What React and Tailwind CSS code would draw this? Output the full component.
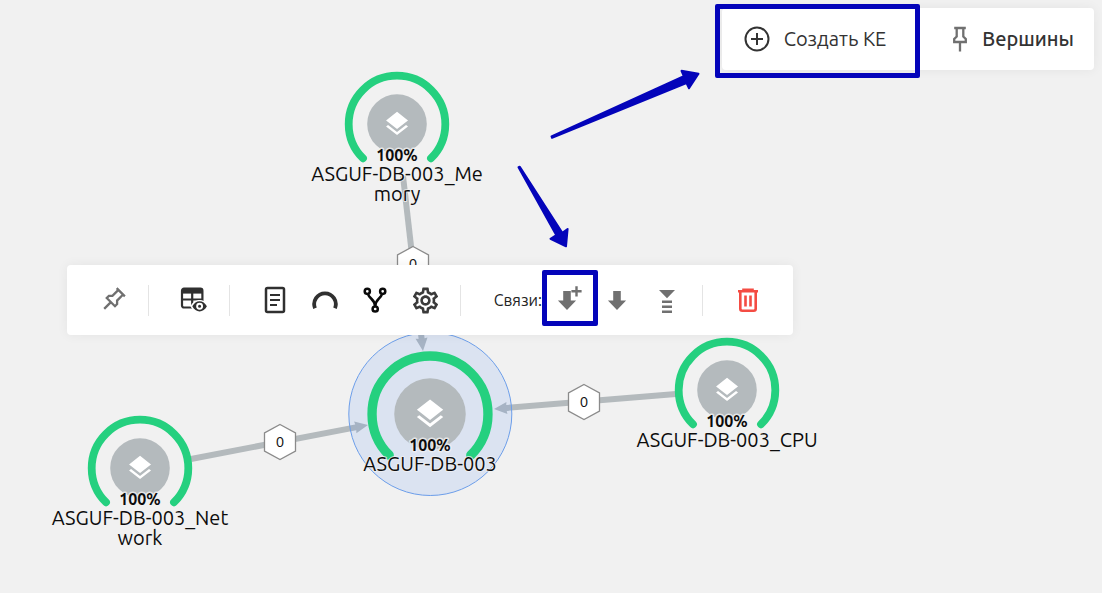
import { useState } from 'react'
import { MdOutlineSettings } from 'react-icons/md'

const nodes = [
  { id: 'memory', x: 397, y: 124, scale: 1, label: ['ASGUF-DB-003_Me', 'mory'] },
  { id: 'db', x: 430, y: 414, scale: 1.2, label: ['ASGUF-DB-003'] },
  { id: 'cpu', x: 727, y: 390, scale: 1, label: ['ASGUF-DB-003_CPU'] },
  { id: 'network', x: 140, y: 468, scale: 1, label: ['ASGUF-DB-003_Net', 'work'] }
]

const edges = [
  { id: 'memory-db', from: [403, 176], to: [423, 351], badge: [413, 264], count: 0 },
  { id: 'cpu-db', from: [676, 394], to: [494, 409], badge: [584, 402], count: 0 },
  { id: 'network-db', from: [191, 459], to: [368, 425], badge: [280, 442], count: 0 }
]

function Edge({ from, to }) {
  const length = Math.hypot(to[0] - from[0], to[1] - from[1])
  const angle = (Math.atan2(to[1] - from[1], to[0] - from[0]) * 180) / Math.PI
  return (
    <g transform={`translate(${from[0]} ${from[1]}) rotate(${angle})`} fill="#b4babd">
      <rect x="0" y="-3" width={length - 10} height="6" />
      <polygon points={`${length},0 ${length - 13},-6 ${length - 12},0 ${length - 13},6`} />
    </g>
  )
}

function EdgeBadge({ at, count }) {
  return (
    <g transform={`translate(${at[0]} ${at[1]})`}>
      <polygon points="0,-17.5 15.5,-9 15.5,9 0,17.5 -15.5,9 -15.5,-9" fill="#fff" stroke="#8b8b8b" strokeWidth="1.3" />
      <text y="5" textAnchor="middle" fontSize="15" fill="#111">{count}</text>
    </g>
  )
}

function Node({ x, y, scale, label }) {
  return (
    <g transform={`translate(${x} ${y})`}>
      <g transform={`scale(${scale})`}>
        <path d="M-34 34.3A48.3 48.3 0 1 1 34 34.3" fill="none" stroke="#25d07f" strokeWidth="7.8" strokeLinecap="round" />
        <circle r="29.8" fill="#b4babd" />
        <g transform="translate(-14.6 -14.6) scale(1.22)" fill="#fff">
          <path d="M11.99 18.54l-7.37-5.73L3 14.07l9 7 9-7-1.63-1.27-7.38 5.74zM12 16l7.36-5.73L21 9l-9-7-9 7 1.63 1.27L12 16z" />
        </g>
      </g>
      <g textAnchor="middle" fill="#0c0c0c" stroke="#f1f1f1" strokeOpacity="0.8" strokeWidth="3" strokeLinejoin="round" paintOrder="stroke">
        <text y="37" fontSize="16" fontWeight="700">100%</text>
        <text y="57" fontSize="20" strokeWidth="2">
          {label.map((line, i) => (
            <tspan key={line} x="0" dy={i === 0 ? 0 : 20}>{line}</tspan>
          ))}
        </text>
      </g>
    </g>
  )
}

function Graph() {
  return (
    <svg className="absolute left-0 top-0 overflow-visible" width="1102" height="593" role="img" aria-label="ASGUF-DB-003">
      {edges.map(edge => <Edge key={edge.id} from={edge.from} to={edge.to} />)}
      {edges.map(edge => <EdgeBadge key={edge.id} at={edge.badge} count={edge.count} />)}
      <circle cx="430.3" cy="414" r="81.5" fill="#4285f4" fillOpacity="0.12" stroke="#6c9eea" strokeWidth="1" />
      {nodes.map(node => <Node key={node.id} {...node} />)}
    </svg>
  )
}

// Tapered pointers towards the two ways of creating an item
function Pointers() {
  return (
    <svg className="pointer-events-none absolute left-0 top-0 z-20" width="1102" height="260" aria-hidden="true">
      <g fill="#0404ba" stroke="#0404ba" strokeWidth="2" strokeLinejoin="round">
        <path d="M551.5 136.3L683.8 76.2L681.5 70.8L698.5 73.8L689 88.3L686.5 83L552 137.8Z" />
        <path d="M518.5 167.2L556.3 235.2L550.5 238.8L566 246.3L567.6 229L562.3 232.8L519.8 166.8Z" />
      </g>
    </svg>
  )
}

function PlusCircleIcon() {
  return (
    <svg width="26" height="26" viewBox="0 0 26 26" fill="none" stroke="#333" strokeWidth="2">
      <circle cx="13" cy="13" r="11.5" />
      <path d="M13 7v12M7 13h12" />
    </svg>
  )
}

function PinIcon({ className }) {
  return (
    <svg className={className} width="16" height="26" viewBox="0 0 16 26" fill="none" stroke="#707070" strokeWidth="2.3">
      <path d="M2.2 2h11.6M4.7 2v8.5L2.2 13v3h11.6v-3l-2.5-2.5V2M8 16v9.5" />
    </svg>
  )
}

function TableEyeIcon() {
  return (
    <svg width="28" height="28" viewBox="0 0 28 28">
      <rect x="2" y="2.7" width="20.4" height="18.8" rx="2" fill="none" stroke="#303030" strokeWidth="2.2" />
      <path d="M2 3h20.4v4.6H2z" fill="#303030" />
      <path d="M12.2 7v15M2 13.5h20.4" stroke="#303030" strokeWidth="2.2" />
      <path d="M10.5 20.3C12.5 16 16 14 19.6 14s7.1 2 9 6.3C26.7 24.6 23.2 27 19.6 27s-7.1-2.4-9.1-6.7Z" fill="#fff" />
      <path d="M12.3 20.3C14 17 16.7 15.2 19.6 15.2s5.6 1.8 7.3 5.1c-1.7 3.3-4.4 5.1-7.3 5.1s-5.6-1.8-7.3-5.1Z" fill="#303030" />
      <circle cx="19.6" cy="20.3" r="2.5" fill="#303030" stroke="#fff" strokeWidth="1.9" />
    </svg>
  )
}

function DocumentIcon() {
  return (
    <svg width="22" height="28" viewBox="0 0 22 28" fill="none" stroke="#303030" strokeWidth="2.5">
      <rect x="2" y="2" width="18" height="24" rx="1.5" />
      <path d="M6 9h10M6 14h10M6 19h7" strokeWidth="2.2" />
    </svg>
  )
}

function ArcIcon() {
  return (
    <svg width="28" height="28" viewBox="0 0 28 28" fill="none" stroke="#303030" strokeWidth="3.8">
      <path d="M4 22.2A10.8 10.8 0 1 1 24 22.2" />
    </svg>
  )
}

function ForkIcon() {
  return (
    <svg width="28" height="28" viewBox="0 0 28 28" fill="none" stroke="#0a0a0a" strokeWidth="2.5">
      <circle cx="6.3" cy="5.3" r="2.6" />
      <circle cx="21.7" cy="5.3" r="2.6" />
      <circle cx="14.2" cy="23" r="2.6" />
      <path d="M7 8C8 12.5 14.2 13.5 14.2 20.5M21 8C20 12.5 14.2 13.5 14.2 20.5" />
    </svg>
  )
}

function ArrowDownIcon({ plus }) {
  return (
    <svg className="overflow-visible" width="28" height="28" viewBox="0 0 28 28" fill="#707070">
      <path d="M10.2 5h7.6v9.6h5.3L14 24 4.9 14.6h5.3z" />
      {plus && <path d="M22.3 0.2h2.4v3.9h3.9v2.4h-3.9v3.9h-2.4V6.5h-3.9V4.1h3.9z" />}
    </svg>
  )
}

function CollapseIcon() {
  return (
    <svg width="28" height="28" viewBox="0 0 28 28" fill="#707070">
      <path d="M6 4h16l-8 8.3zM9 14.5h10v2.5H9zM9 19.5h10v2.5H9zM9 24.5h10v2.5H9z" />
    </svg>
  )
}

function TrashIcon() {
  return (
    <svg width="28" height="28" viewBox="0 0 28 28" fill="none" stroke="#f44c43" strokeWidth="2.6">
      <path d="M4 5.2h20M9.5 5V3.8h9V5M6.3 5.5v17.2a2 2 0 0 0 2 2h11.4a2 2 0 0 0 2-2V5.5" />
      <path d="M11.5 9.5v11M16.5 9.5v11" />
    </svg>
  )
}

function ToolButton({ label, children, highlighted, onClick, pressed }) {
  return (
    <button
      type="button"
      aria-label={label}
      aria-pressed={pressed}
      onClick={onClick}
      className="relative flex h-[50px] w-[50px] shrink-0 cursor-pointer items-center justify-center"
    >
      {children}
      {highlighted && (
        <span className="pointer-events-none absolute -bottom-px -right-1.5 -top-[5px] left-0 rounded-xs border-[5px] border-[#0404ba]" />
      )}
    </button>
  )
}

function Divider() {
  return <span className="ml-2.5 mr-5 h-[31px] w-px shrink-0 bg-[#e4e4e4]" />
}

function NodeToolbar() {
  const [pinned, setPinned] = useState(false)

  return (
    <div
      role="toolbar"
      aria-label="ASGUF-DB-003"
      className="absolute left-[67px] top-[265px] z-10 flex h-[70px] items-center rounded-sm bg-white pl-[21px] pr-5 shadow-[0_0_12px_rgba(0,0,0,0.06)]"
    >
      <ToolButton label="Закрепить" pressed={pinned} onClick={() => setPinned(!pinned)}>
        <PinIcon className="rotate-45" />
      </ToolButton>
      <Divider />
      <ToolButton label="Просмотр таблицы"><TableEyeIcon /></ToolButton>
      <Divider />
      <ToolButton label="Карточка"><DocumentIcon /></ToolButton>
      <ToolButton label="Здоровье"><ArcIcon /></ToolButton>
      <ToolButton label="Ветвление"><ForkIcon /></ToolButton>
      <ToolButton label="Настройки"><MdOutlineSettings size={31} color="#3a3a3a" /></ToolButton>
      <Divider />
      <span className="w-[61px] text-right text-[16px] text-[#222]">Связи:</span>
      <ToolButton label="Создать связь" highlighted><ArrowDownIcon plus /></ToolButton>
      <ToolButton label="Добавить связь"><ArrowDownIcon /></ToolButton>
      <ToolButton label="Свернуть связи"><CollapseIcon /></ToolButton>
      <Divider />
      <ToolButton label="Удалить"><TrashIcon /></ToolButton>
    </div>
  )
}

export default function App() {
  return (
    <main className="relative min-h-screen overflow-hidden bg-[#f1f1f1] font-['Ubuntu','Noto_Sans',sans-serif] text-[#333]">
      <Graph />

      <header className="relative z-10 flex justify-end p-2">
        <div className="flex h-[62px] items-center rounded-sm bg-white shadow-[0_0_12px_rgba(0,0,0,0.06)]">
          <button type="button" className="relative flex h-full cursor-pointer items-center gap-3.5 pl-[22px] pr-[34px] text-[20px]">
            <PlusCircleIcon />
            Создать КЕ
            <span className="pointer-events-none absolute -bottom-2 -left-[7px] -top-1 right-0 rounded-xs border-[5px] border-[#0404ba]" />
          </button>
          <button type="button" className="flex h-full cursor-pointer items-center gap-3.5 pl-8 pr-5 text-[20px] font-medium">
            <PinIcon />
            Вершины
          </button>
        </div>
      </header>

      <NodeToolbar />
      <Pointers />
    </main>
  )
}
